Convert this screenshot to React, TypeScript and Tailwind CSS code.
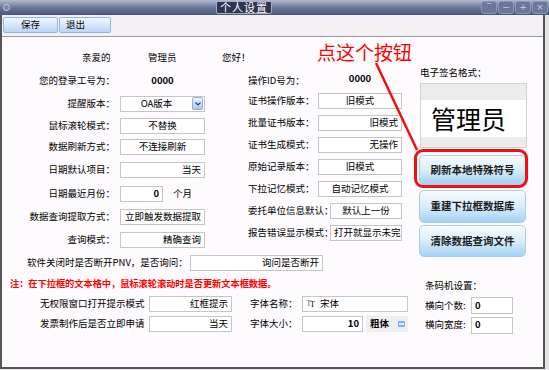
import React from "react";

type Align = "center" | "right" | "left";

function Box({
  w,
  h = "h-[16px]",
  align = "center",
  bold = false,
  children,
}: {
  w: string;
  h?: string;
  align?: Align;
  bold?: boolean;
  children?: React.ReactNode;
}) {
  const a =
    align === "center"
      ? "justify-center"
      : align === "right"
      ? "justify-end pr-[3px]"
      : "justify-start pl-[3px]";
  return (
    <div
      className={`${w} ${h} shrink-0 border border-[#c5c5c5] bg-white flex items-center overflow-hidden whitespace-nowrap ${a} ${
        bold ? "font-bold" : ""
      }`}
    >
      {children}
    </div>
  );
}

function LRow({ h, label, children }: { h: string; label: string; children?: React.ReactNode }) {
  return (
    <div className={`flex items-center ${h}`}>
      <div className="w-[113px] text-right whitespace-nowrap">{label}</div>
      <div className="ml-[5px] flex items-center">{children}</div>
    </div>
  );
}

function MRow({
  h = "h-[22px]",
  lw = "w-[70px]",
  label,
  children,
}: {
  h?: string;
  lw?: string;
  label: string;
  children?: React.ReactNode;
}) {
  return (
    <div className={`flex items-center ${h}`}>
      <div className={`${lw} shrink-0 whitespace-nowrap`}>{label}</div>
      {children}
    </div>
  );
}

function BlueButton({ h, children }: { h: string; children: React.ReactNode }) {
  return (
    <div
      className={`${h} w-[107px] rounded-[5px] border border-[#a9cbe6] bg-linear-to-b from-[#f7fbff] via-[#d9edfb] to-[#a3d2f4] flex items-center justify-center font-bold text-[10.5px] text-[#1b1b1b] shadow-[inset_0_1px_0_#ffffff]`}
    >
      {children}
    </div>
  );
}

export default function App() {
  const ctrls = ["‾", "−", "+", "×"];
  return (
    <div className="w-[549px] h-[370px] bg-[#e4e4e6] relative overflow-hidden font-['Noto_Sans_CJK_SC','Noto_Sans',sans-serif] text-[9.5px] leading-none text-black">
      {/* title bar */}
      <div className="h-[15px] bg-linear-to-b from-[#b4bbce] via-[#6a789b] to-[#46557b] flex items-center">
        <div className="ml-[3px] w-[7px] h-[7px] rounded-full border border-[#cdd3e0] bg-[#7987a8]" />
        <div className="ml-[206px] h-[13px] px-[3px] bg-[#2e3553] border border-[#a7aec4] rounded-[2px] text-white text-[11px] leading-[11px] flex items-center tracking-[1px]">
          个人设置
        </div>
        <div className="ml-auto mr-[1px] flex gap-[1px]">
          {ctrls.map((c) => (
            <div
              key={c}
              className="w-[16px] h-[13px] rounded-[3px] border border-[#8e98b3] bg-[#6b7899] flex items-center justify-center text-[#c9cfdc] text-[9px] leading-none font-['DejaVu_Sans',sans-serif]"
            >
              {c}
            </div>
          ))}
        </div>
      </div>

      {/* frame */}
      <div className="w-[545px] border-l-2 border-r-2 border-b-2 border-[#565656]">
        {/* toolbar */}
        <div className="h-[22px] bg-[#f3f1f5] border-b border-[#9a9a9a] flex items-start pt-[2px] pl-[1px] gap-[1px]">
          <div className="w-[55px] h-[16px] rounded-[2px] border border-[#92b6e2] bg-linear-to-b from-[#f3f8fe] to-[#b9d5f5] flex items-center justify-center">
            保存
          </div>
          <div className="w-[52px] h-[16px] rounded-[2px] border border-[#92b6e2] bg-linear-to-b from-[#f3f8fe] to-[#b9d5f5] flex items-center pl-[6px]">
            退出
          </div>
        </div>

        {/* body */}
        <div className="h-[330px] bg-[#fdfbfd] flex">
          {/* main block */}
          <div className="w-[408px] flex flex-col">
            <div className="flex">
              {/* left column */}
              <div className="w-[213px] pt-[9px] flex flex-col">
                <div className="flex items-center h-[23px] pl-[80px] whitespace-nowrap">
                  <span className="w-[66px] shrink-0">亲爱的</span>
                  <span className="w-[74px] shrink-0">管理员</span>
                  <span>您好！</span>
                </div>
                <LRow h="h-[23px]" label="您的登录工号为：">
                  <div className="w-[85px] text-center font-bold">0000</div>
                </LRow>
                <LRow h="h-[23px]" label="提醒版本：">
                  <div className="w-[85px] h-[16px] border border-[#c5c5c5] bg-white flex items-center">
                    <div className="flex-1 text-center">OA版本</div>
                    <div className="w-[11px] h-[13px] mr-[1px] rounded-[2px] border border-[#8fb2dc] bg-linear-to-b from-[#eef5fe] to-[#a8cbf1] flex items-center justify-center">
                      <svg width="6" height="4" viewBox="0 0 6 4">
                        <path d="M0.5 0.5 L3 3 L5.5 0.5" fill="none" stroke="#23468a" strokeWidth="1.2" />
                      </svg>
                    </div>
                  </div>
                </LRow>
                <LRow h="h-[21px]" label="鼠标滚轮模式：">
                  <Box w="w-[85px]">不替换</Box>
                </LRow>
                <LRow h="h-[22px]" label="数据刷新方式：">
                  <Box w="w-[85px]">不连接刷新</Box>
                </LRow>
                <LRow h="h-[24px]" label="日期默认项目：">
                  <Box w="w-[85px]" align="right">当天</Box>
                </LRow>
                <LRow h="h-[23px]" label="日期最近月份：">
                  <Box w="w-[43px]" align="right" bold>
                    0
                  </Box>
                  <span className="ml-[10px]">个月</span>
                </LRow>
                <LRow h="h-[23px]" label="数据查询提取方式：">
                  <Box w="w-[85px]" align="right">立即触发数据提取</Box>
                </LRow>
                <LRow h="h-[23px]" label="查询模式：">
                  <Box w="w-[85px]" align="right">精确查询</Box>
                </LRow>
              </div>

              {/* middle column */}
              <div className="w-[195px] pt-[35px] pl-[33px] flex flex-col">
                <MRow h="h-[18px]" label="操作ID号为：">
                  <div className="w-[84px] text-center font-bold -mt-[4px]">0000</div>
                </MRow>
                <MRow label="证书操作版本：">
                  <Box w="w-[84px]">旧模式</Box>
                </MRow>
                <MRow label="批量证书版本：">
                  <Box w="w-[84px]" align="right">旧模式</Box>
                </MRow>
                <MRow label="证书生成模式：">
                  <Box w="w-[84px]" align="right">无操作</Box>
                </MRow>
                <MRow label="原始记录版本：">
                  <Box w="w-[84px]">旧模式</Box>
                </MRow>
                <MRow label="下拉记忆模式：">
                  <Box w="w-[84px]">自动记忆模式</Box>
                </MRow>
                <MRow lw="w-[82px]" label="委托单位信息默认：">
                  <Box w="w-[72px]">默认上一份</Box>
                </MRow>
                <MRow lw="w-[82px]" label="报告错误显示模式：">
                  <Box w="w-[72px]" align="left">打开就显示未完成</Box>
                </MRow>
              </div>
            </div>

            {/* PNV row */}
            <div className="h-[23px] flex items-center pl-[25px]">
              <div className="w-[163px] whitespace-nowrap">软件关闭时是否断开PNV，是否询问：</div>
              <Box w="w-[133px]" align="right">询问是否断开</Box>
            </div>

            {/* note */}
            <div className="h-[20px] flex items-center pl-[8px] text-[#ff0000] font-bold whitespace-nowrap text-[9.2px]">
              注：在下拉框的文本格中，鼠标滚轮滚动时是否更新文本框数据。
            </div>

            {/* bottom rows */}
            <div className="h-[20px] flex items-center pl-[38px]">
              <div className="w-[109px] shrink-0 whitespace-nowrap">无权限窗口打开提示模式</div>
              <Box w="w-[83px]" align="right">红框提示</Box>
              <div className="ml-[18px] w-[52px] shrink-0 whitespace-nowrap">字体名称：</div>
              <Box w="w-[106px]" align="left">
                <span className="relative w-[11px] h-[10px] inline-block mr-[3px] font-['Liberation_Serif',serif]">
                  <span className="absolute left-0 top-0 text-[9px] leading-none text-[#777]">T</span>
                  <span className="absolute left-[4px] top-[2px] text-[8px] leading-none text-black">T</span>
                </span>
                <span>宋体</span>
              </Box>
            </div>
            <div className="h-[20px] flex items-center pl-[38px]">
              <div className="w-[109px] shrink-0 whitespace-nowrap">发票制作后是否立即申请</div>
              <Box w="w-[83px]" align="right">当天</Box>
              <div className="ml-[18px] w-[52px] shrink-0 whitespace-nowrap">字体大小：</div>
              <Box w="w-[61px]" align="right" bold>
                10
              </Box>
              <div className="ml-[3px] w-[42px] h-[16px] bg-[#efeef0] flex items-center">
                <span className="ml-[4px] font-bold">粗体</span>
                <svg className="ml-auto mr-[3px]" width="7" height="6" viewBox="0 0 7 6">
                  <rect x="0" y="0" width="7" height="6" rx="1" fill="#7fb2ea" />
                  <rect x="1" y="2" width="5" height="2" fill="#dcebfb" />
                </svg>
              </div>
            </div>
          </div>

          {/* right block */}
          <div className="w-[133px] pt-[28px] pl-[9px] flex flex-col">
            <div className="h-[16px] flex items-center ml-[1px] whitespace-nowrap">电子签名格式：</div>
            <div className="mt-[2px] ml-[1px] w-[107px] h-[65px] border border-[#d2d2d2] flex flex-col bg-white">
              <div className="h-[16px] bg-[#ececec]" />
              <div className="flex-1 flex items-center pl-[10px] text-[25px] leading-none">管理员</div>
              <div className="h-[10px] bg-[#ececec]" />
            </div>
            <div className="mt-[7px] relative w-[107px]">
              <BlueButton h="h-[30px]">刷新本地特殊符号</BlueButton>
              <div className="absolute left-[-5px] right-[-2px] top-[-6px] bottom-[-3px] border-[3px] border-[#f01010] rounded-[9px]" />
            </div>
            <div className="mt-[5px]">
              <BlueButton h="h-[33px]">重建下拉框数据库</BlueButton>
            </div>
            <div className="mt-[2px]">
              <BlueButton h="h-[32px]">清除数据查询文件</BlueButton>
            </div>
            <div className="mt-[19px] h-[20px] flex items-center pl-[6px] whitespace-nowrap">条码机设置：</div>
            <div className="h-[19px] flex items-center pl-[6px]">
              <div className="w-[46px] shrink-0 whitespace-nowrap">横向个数:</div>
              <Box w="w-[42px]" h="h-[17px]" align="left" bold>
                0
              </Box>
            </div>
            <div className="h-[20px] flex items-center pl-[6px]">
              <div className="w-[46px] shrink-0 whitespace-nowrap">横向宽度:</div>
              <Box w="w-[42px]" h="h-[17px]" align="left" bold>
                0
              </Box>
            </div>
          </div>
        </div>
      </div>

      {/* annotation */}
      <div className="absolute left-[317px] top-[41px] text-[19px] leading-[22px] text-[#ff0000] whitespace-nowrap">
        点这个按钮
      </div>
      <svg className="absolute left-0 top-0 pointer-events-none" width="549" height="370" viewBox="0 0 549 370">
        <line x1="376" y1="63" x2="417" y2="150" stroke="#f01010" strokeWidth="2.5" />
      </svg>
    </div>
  );
}
